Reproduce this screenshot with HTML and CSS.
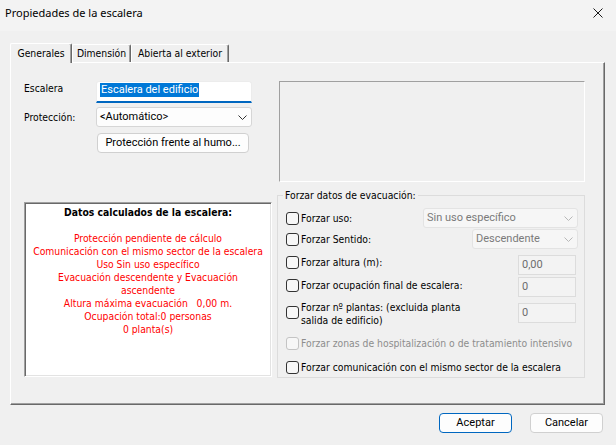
FILE: index.html
```html
<!DOCTYPE html>
<html lang="es">
<head>
<meta charset="utf-8">
<title>Propiedades de la escalera</title>
<link rel="stylesheet" href="styles.css">
</head>
<body>
<div class="titlebar">
  <span class="title">Propiedades de la escalera</span>
  <svg class="close" width="10" height="10" viewBox="0 0 10 10"><path d="M0.5 0.5 L9.5 9.5 M9.5 0.5 L0.5 9.5" stroke="#1a1a1a" stroke-width="1" fill="none"/></svg>
</div>
<div class="tabs">
  <div class="tab active t1">Generales</div>
  <div class="tab t2">Dimensión</div>
  <div class="tab t3">Abierta al exterior</div>
</div>
<div class="panel">
  <div class="top-row">
    <div class="form">
      <div class="frow r-esc">
        <span class="lbl">Escalera</span>
        <div class="edit"><span class="sel">Escalera del edificio</span></div>
      </div>
      <div class="frow r-prot">
        <span class="lbl">Protección:</span>
        <div class="combo"><span>&lt;Automático&gt;</span><svg class="chev" width="9" height="5" viewBox="0 0 9 5"><path d="M0.5 0.5 L4.5 4.5 L8.5 0.5" stroke="#333" stroke-width="1" fill="none"/></svg></div>
      </div>
      <div class="btn humo">Protección frente al humo...</div>
    </div>
    <div class="preview"></div>
  </div>
  <div class="bottom-row">
    <div class="datos">
      <div class="dtitle">Datos calculados de la escalera:</div>
      <div class="dred">
        <div>Protección pendiente de cálculo</div>
        <div>Comunicación con el mismo sector de la escalera</div>
        <div>Uso Sin uso específico</div>
        <div>Evacuación descendente y Evacuación</div>
        <div>ascendente</div>
        <div>Altura máxima evacuación&nbsp;&nbsp; 0,00 m.</div>
        <div>Ocupación total:0 personas</div>
        <div>0 planta(s)</div>
      </div>
    </div>
    <fieldset class="group">
      <legend>Forzar datos de evacuación:</legend>
      <div class="grow g1">
        <div class="chkl"><span class="chk"></span><span>Forzar uso:</span></div>
        <div class="combo dis w155"><span>Sin uso específico</span><svg class="chev" width="9" height="5" viewBox="0 0 9 5"><path d="M0.5 0.5 L4.5 4.5 L8.5 0.5" stroke="#b8b8b8" stroke-width="1" fill="none"/></svg></div>
      </div>
      <div class="grow g2">
        <div class="chkl"><span class="chk"></span><span>Forzar Sentido:</span></div>
        <div class="combo dis w106"><span>Descendente</span><svg class="chev" width="9" height="5" viewBox="0 0 9 5"><path d="M0.5 0.5 L4.5 4.5 L8.5 0.5" stroke="#b8b8b8" stroke-width="1" fill="none"/></svg></div>
      </div>
      <div class="grow g3">
        <div class="chkl"><span class="chk"></span><span>Forzar altura (m):</span></div>
        <div class="field">0,00</div>
      </div>
      <div class="grow g4">
        <div class="chkl"><span class="chk"></span><span>Forzar ocupación final de escalera:</span></div>
        <div class="field">0</div>
      </div>
      <div class="grow g5">
        <div class="chkl"><span class="chk"></span><span class="two">Forzar nº plantas: (excluida planta<br>salida de edificio)</span></div>
        <div class="field">0</div>
      </div>
      <div class="grow g6">
        <div class="chkl disabled"><span class="chk"></span><span>Forzar zonas de hospitalización o de tratamiento intensivo</span></div>
      </div>
      <div class="grow g7">
        <div class="chkl"><span class="chk"></span><span>Forzar comunicación con el mismo sector de la escalera</span></div>
      </div>
    </fieldset>
  </div>
</div>
<div class="footer">
  <div class="btn ok">Aceptar</div>
  <div class="btn">Cancelar</div>
</div>
</body>
</html>
```

FILE: styles.css
```css
* { box-sizing: border-box; }
html, body { margin: 0; padding: 0; }
body {
  width: 616px;
  height: 445px;
  overflow: hidden;
  background: #f0f0f0;
  color: #000;
  font-family: "DejaVu Sans Condensed", "DejaVu Sans", sans-serif;
  font-stretch: condensed;
  font-size: 10.3px;
  line-height: 13px;
}

/* title bar */
.titlebar {
  height: 31px;
  background: #f3f3f3;
  display: flex;
  align-items: center;
  justify-content: space-between;
  padding: 0 13px 6px 5px;
}
.title {
  font-family: "Noto Sans", sans-serif;
  font-stretch: normal;
  font-size: 11px;
  line-height: 14px;
}
.close { display: block; }

/* tabs */
.tabs {
  height: 32px;
  margin-bottom: -1px;
  padding-left: 10px;
  display: flex;
  align-items: flex-end;
  position: relative;
  z-index: 1;
}
.tab {
  height: 18px;
  margin-bottom: 1px;
  line-height: 17px;
  text-align: center;
  border-top: 1px solid #fff;
  border-left: 1px solid #fff;
  border-right: 1px solid #696969;
  box-shadow: inset -1px 0 0 #a0a0a0;
  border-radius: 2px 2px 0 0;
  background: #f0f0f0;
}
.tab.active {
  height: 20px;
  margin-bottom: 0;
  line-height: 19px;
}
.t1 { width: 62px; }
.t2 { width: 59px; }
.t3 { width: 98px; }

/* panel */
.panel {
  margin-left: 10px;
  width: 595px;
  height: 343px;
  border-top: 1px solid #fff;
  border-left: 1px solid #fff;
  border-right: 1px solid #696969;
  border-bottom: 1px solid #696969;
  box-shadow: inset -1px -1px 0 #a0a0a0;
  padding: 18px 0 0 13px;
}
.top-row { display: flex; height: 101px; }
.form { width: 255px; }
.frow { display: flex; }
.lbl { width: 72px; line-height: 14px; }
.r-esc { height: 22px; align-items: flex-start; }
.ui {
  font-family: Roboto, "Noto Sans", sans-serif;
}
.edit {
  width: 156px;
  height: 22px;
  background: #fff;
  border: 1px solid #ececec;
  border-bottom: 2px solid #0067c0;
  border-radius: 3px 3px 0 0;
  padding: 1px 0 0 3px;
  font-family: Roboto, "Noto Sans", sans-serif;
  font-stretch: normal;
  font-size: 11px;
}
.sel {
  display: inline-block;
  background: #0078d7;
  color: #fff;
  line-height: 14px;
  padding: 0 1px;
}
.r-prot { margin-top: 4px; height: 20px; align-items: center; }
.combo {
  width: 156px;
  height: 20px;
  background: #fdfdfd;
  border: 1px solid #d6d6d6;
  border-radius: 3px;
  display: flex;
  align-items: center;
  justify-content: space-between;
  padding: 0 4px 0 3px;
  font-family: Roboto, "Noto Sans", sans-serif;
  font-stretch: normal;
  font-size: 11px;
  line-height: 14px;
}
.chev { display: block; }
.btn {
  width: 73px;
  height: 20px;
  background: #fdfdfd;
  border: 1px solid #d0d0d0;
  border-radius: 4px;
  display: flex;
  align-items: center;
  justify-content: center;
  font-family: Roboto, "Noto Sans", sans-serif;
  font-stretch: normal;
  font-size: 11px;
  line-height: 14px;
}
.humo { width: 152px; margin: 6px 0 0 73px; }
.preview {
  width: 306px;
  height: 101px;
  border: 1px solid;
  border-color: #a0a0a0 #fff #fff #a0a0a0;
}

/* bottom */
.bottom-row { display: flex; margin-top: 7px; }
.datos {
  width: 248px;
  height: 175px;
  margin: 13px 5px 0 0;
  background: #fff;
  border: 1px solid;
  border-color: #a0a0a0 #fff #fff #a0a0a0;
  box-shadow: inset 1px 1px 0 #696969, inset -1px -1px 0 #e3e3e3;
  padding-top: 3px;
  text-align: center;
}
.dtitle { font-weight: bold; margin-bottom: 13px; }
.dred { color: #ff0000; }

.group {
  width: 308px;
  height: 189px;
  margin: 0;
  padding: 0 6px 0 8px;
  border: 1px solid #dcdcdc;
  min-width: 0;
}
.group legend {
  padding: 0 2px;
  margin-left: -3px;
  line-height: 13px;
}
.grow {
  display: flex;
  justify-content: space-between;
  align-items: flex-start;
}
.chkl { display: flex; align-items: center; line-height: 14px; }
.chk {
  width: 13px;
  height: 13px;
  border: 1px solid #333;
  border-radius: 3px;
  background: #f7f7f7;
  margin-right: 2px;
  flex: none;
}
.chkl.disabled { color: #8d8d8d; }
.chkl.disabled .chk { border-color: #c4c4c4; }
.combo.dis {
  background: #f6f6f6;
  border-color: #e3e3e3;
  color: #7a7a7a;
}
.w155 { width: 155px; }
.w106 { width: 106px; }
.field {
  width: 58px;
  height: 20px;
  margin-right: 2px;
  background: #f3f3f3;
  border: 1px solid #dcdcdc;
  padding-left: 3px;
  display: flex;
  align-items: center;
  color: #6d6d6d;
  font-family: Roboto, "Noto Sans", sans-serif;
  font-stretch: normal;
  font-size: 11px;
  line-height: 14px;
}
.g1 { margin-top: 6px; height: 20px; align-items: center; }
.g2 { margin-top: 1px; height: 20px; align-items: center; }
.g3 { margin-top: 6px; height: 20px; }
.g4 { margin-top: 2px; height: 20px; }
.g4 .chkl { margin-top: 1px; }
.g5 { margin-top: 4px; height: 27px; }
.g5 .chkl { align-items: flex-start; }
.g5 .chk { margin-top: 5px; }
.g5 .two { line-height: 13.4px; }
.g5 .field { margin-top: 2px; }
.g6 { margin-top: 8px; height: 14px; }
.g7 { margin-top: 10px; height: 14px; }

/* footer */
.footer {
  margin-top: 8px;
  padding-right: 13px;
  display: flex;
  justify-content: flex-end;
  gap: 18px;
}
.btn.ok { border-color: #0067c0; }
```
